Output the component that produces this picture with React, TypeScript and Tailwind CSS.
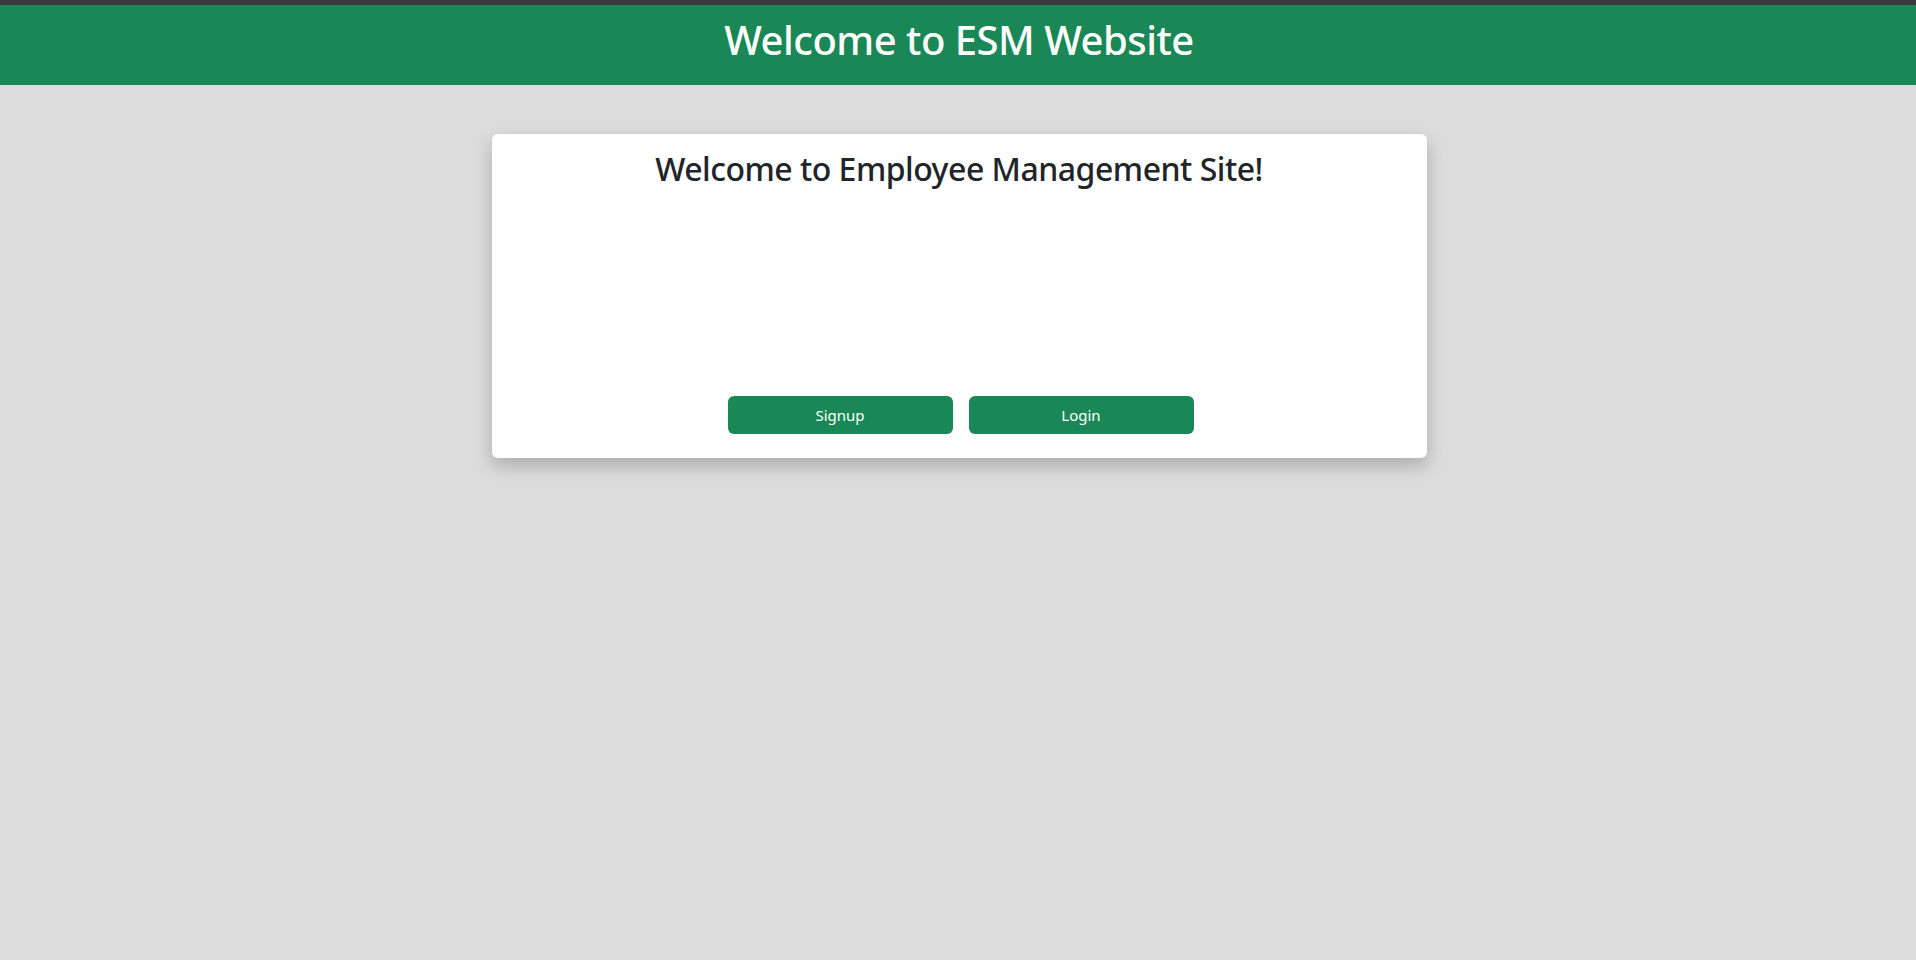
import React from 'react';

export default function App(): React.ReactElement {
    const font = { fontFamily: '"Noto Sans", "Open Sans", sans-serif' };

    return (
        <div className="min-h-[960px] bg-[#dcdcdc]" style={font}>
            {/* top strip */}
            <div className="h-[5px] bg-[#3a3a3a]" />

            {/* header */}
            <header className="h-[80px] bg-[#198856] flex justify-center pt-[11px]">
                <h1 className="text-[40px] leading-[1.2] text-white font-medium tracking-[-0.5px] ml-[2px]">Welcome to ESM Website</h1>
            </header>

            {/* card */}
            <div className="flex justify-center pt-[49px]">
                <div className="w-[935px] h-[324px] ml-[2px] bg-white rounded-[6px] shadow-[0_8px_18px_rgba(0,0,0,0.22)] flex flex-col items-center pt-[16px]">
                    <h2 className="text-[32px] leading-[1.2] text-[#212529] font-medium tracking-[-0.5px]">
                        Welcome to Employee Management Site!
                    </h2>
                    <div className="flex-1" />
                    <div className="flex gap-4 pb-[24px] pl-[3px]">
                        <button className="w-[225px] h-[38px] bg-[#198856] text-white text-[15px] rounded-[6px]">
                            Signup
                        </button>
                        <button className="w-[225px] h-[38px] bg-[#198856] text-white text-[15px] rounded-[6px]">
                            Login
                        </button>
                    </div>
                </div>
            </div>
        </div>
    );
}
